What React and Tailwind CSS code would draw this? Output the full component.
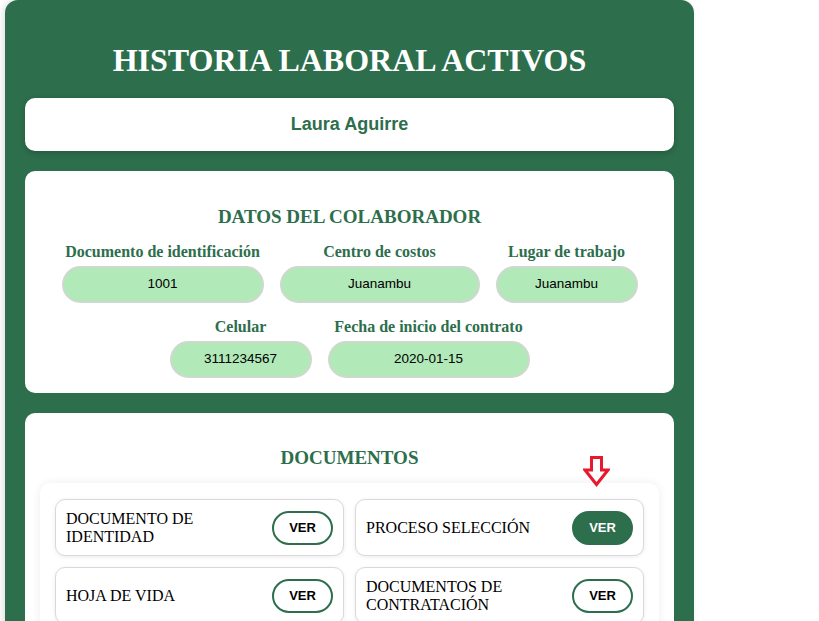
const datosFila1 = [
  { label: 'Documento de identificación', value: '1001', w: 'w-[202px]' },
  { label: 'Centro de costos', value: 'Juanambu', w: 'w-[200px]' },
  { label: 'Lugar de trabajo', value: 'Juanambu', w: 'w-[142px]' },
]

const datosFila2 = [
  { label: 'Celular', value: '3111234567', w: 'w-[142px]' },
  { label: 'Fecha de inicio del contrato', value: '2020-01-15', w: 'w-[202px]' },
]

const documentos = [
  { name: 'DOCUMENTO DE IDENTIDAD', active: false },
  { name: 'PROCESO SELECCIÓN', active: true },
  { name: 'HOJA DE VIDA', active: false },
  { name: 'DOCUMENTOS DE CONTRATACIÓN', active: false },
]

const serif = "font-['Liberation_Serif','Times_New_Roman',serif]"
const sans = "font-['Liberation_Sans',Arial,sans-serif]"

const Campo = ({ item }) => (
  <div className="flex flex-col items-center">
    <span className={`${serif} text-[16px] font-bold leading-[18px] text-[#2d6e4c]`}>
      {item.label}
    </span>
    <div
      className={`mt-[5px] flex h-[37px] items-center justify-center rounded-full border-2 border-[#cfd8cf] bg-[#b1e9b8] ${item.w} ${sans} text-[13.5px] text-black`}
    >
      {item.value}
    </div>
  </div>
)

// flecha roja que señala el documento activo
const FlechaRoja = () => (
  <svg width="27" height="31" viewBox="0 0 27 31" fill="none">
    <path
      d="M8.5 1.5 H18.5 V14 H25 L13.5 28.5 L2 14 H8.5 Z"
      stroke="#e8192c"
      strokeWidth="3"
      strokeLinejoin="miter"
      fill="white"
    />
  </svg>
)

const App = () => {
  return (
    <div className="min-h-screen bg-white">
      <div className="ml-[5px] w-[689px] rounded-t-[13px] bg-[#2d6e4c] px-5 pb-5 pt-[42px] shadow-[-2px_0_6px_rgba(0,0,0,0.12)]">
        <h1 className={`${serif} mb-[19px] text-center text-[32px] font-bold leading-[37px] text-white`}>
          HISTORIA LABORAL ACTIVOS
        </h1>

        <div className="flex h-[53px] items-center justify-center rounded-[10px] bg-white shadow-[0_2px_6px_rgba(0,0,0,0.2)]">
          <span className={`${sans} text-[18px] font-bold text-[#2d6e4c]`}>
            Laura Aguirre
          </span>
        </div>

        <div className="mt-5 rounded-[10px] bg-white px-5 pb-[15px] pt-[35px]">
          <h2 className={`${serif} text-center text-[19px] font-bold leading-[22px] text-[#2d6e4c]`}>
            DATOS DEL COLABORADOR
          </h2>
          <div className="mt-[15px] flex justify-center gap-4">
            {datosFila1.map((d) => (
              <Campo key={d.label} item={d} />
            ))}
          </div>
          <div className="mt-[15px] flex justify-center gap-4">
            {datosFila2.map((d) => (
              <Campo key={d.label} item={d} />
            ))}
          </div>
        </div>

        <div className="relative mt-5 rounded-[10px] bg-white px-[15px] pb-5 pt-[34px]">
          <h2 className={`${serif} text-center text-[19px] font-bold leading-[22px] text-[#2d6e4c]`}>
            DOCUMENTOS
          </h2>
          <div className="absolute left-[558px] top-[43px]">
            <FlechaRoja />
          </div>
          <div className="mt-[14px] grid grid-cols-2 gap-[11px] rounded-[10px] bg-white p-[15px] pt-4 shadow-[0_0_10px_rgba(0,0,0,0.07)]">
            {documentos.map((doc) => (
              <div
                key={doc.name}
                className="flex h-[57px] items-center gap-[10px] rounded-[10px] border border-[#d9d9d9] bg-white px-[10px] shadow-[0_1px_4px_rgba(0,0,0,0.08)]"
              >
                <span className={`${serif} flex-1 text-[16px] leading-[18px] text-black`}>
                  {doc.name}
                </span>
                <button
                  type="button"
                  className={`${sans} h-[34px] w-[61px] shrink-0 rounded-full border-2 border-[#2d6e4c] text-[13px] font-bold ${
                    doc.active ? 'bg-[#2d6e4c] text-white' : 'bg-white text-black'
                  }`}
                >
                  VER
                </button>
              </div>
            ))}
          </div>
        </div>
      </div>
    </div>
  )
}

export default App
